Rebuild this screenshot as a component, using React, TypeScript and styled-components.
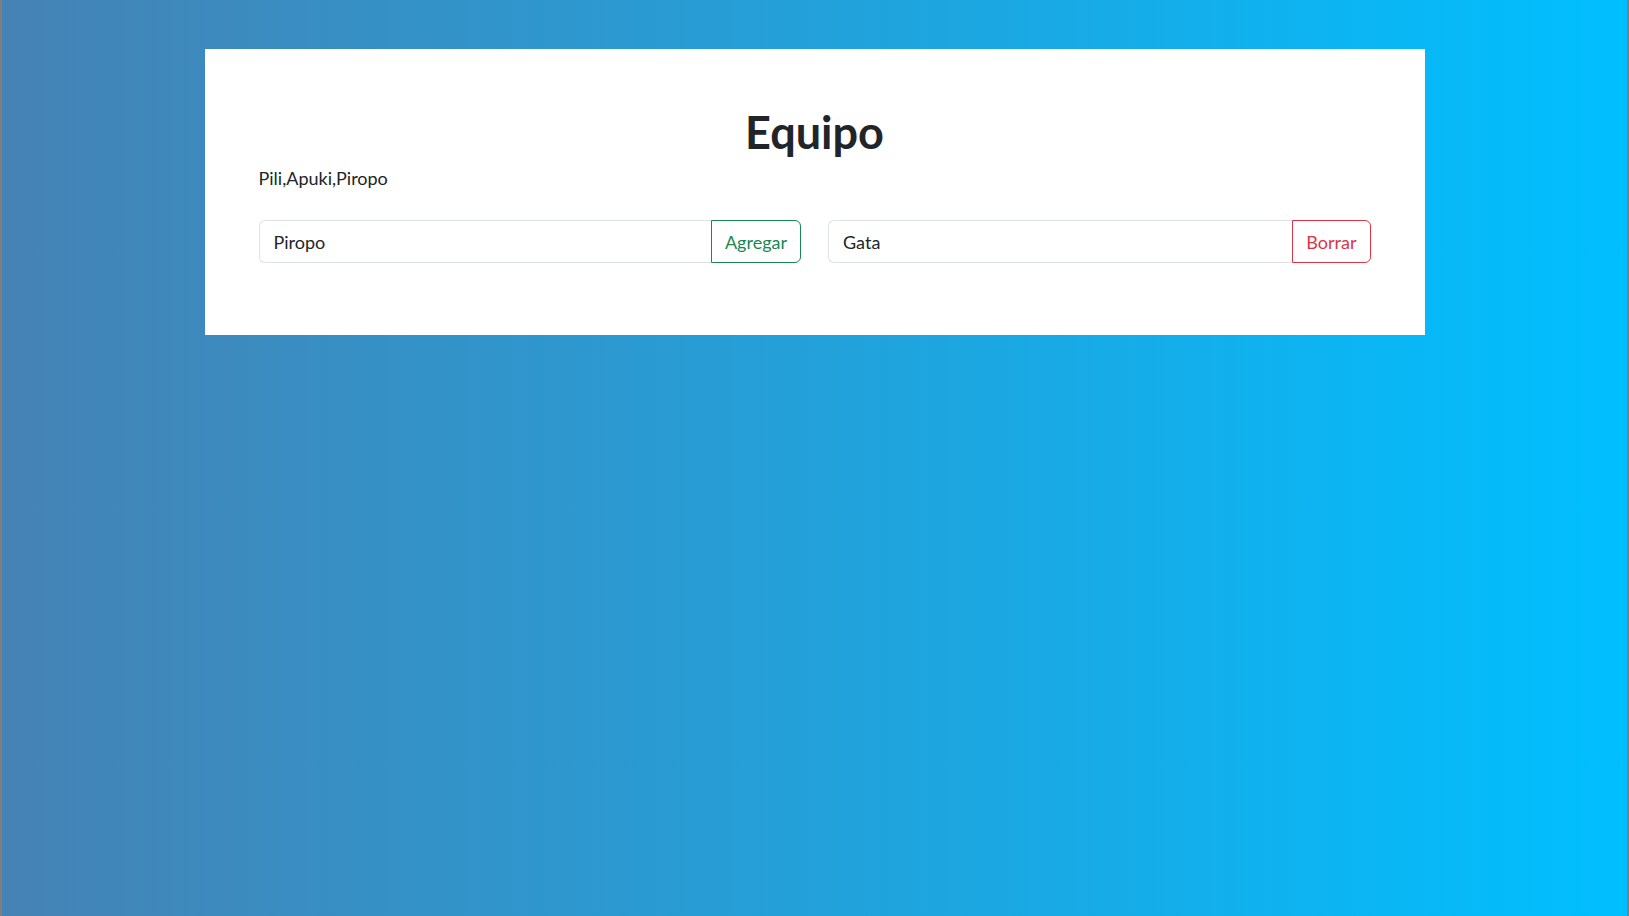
import * as React from 'react';
import styled, { createGlobalStyle } from 'styled-components';

const GlobalStyle = createGlobalStyle`
  html, body {
    margin: 0;
    padding: 0;
  }
  body {
    font-family: 'Lato', 'Noto Sans', sans-serif;
    color: #212529;
  }
  * {
    box-sizing: border-box;
  }
`;

const Page = styled.div`
  min-height: 100vh;
  padding-top: 49px;
  background: linear-gradient(to right, #4682b4, #00bfff);
  border-left: 2px solid #7f7f7f;
  border-right: 2px solid #7f7f7f;
`;

const Card = styled.div`
  width: 1220px;
  margin: 0 auto;
  background: #fff;
  padding: 56px 54px 54px;
`;

const Title = styled.h1`
  margin: 0 0 6px;
  text-align: center;
  font-size: 45px;
  font-weight: 700;
  line-height: 1.2;
`;

const Members = styled.p`
  margin: 1px 0 28px;
  font-size: 18px;
  line-height: 1.5;
`;

const Row = styled.div`
  display: grid;
  grid-template-columns: 1fr 1fr;
  gap: 27px;
  margin-bottom: 18px;
`;

const InputGroup = styled.div`
  display: flex;
  height: 43px;
`;

const Input = styled.input`
  flex: 1;
  min-width: 0;
  height: 100%;
  padding: 0 14px;
  border: 1px solid #dee2e6;
  border-right: none;
  border-radius: 6px 0 0 6px;
  font-family: inherit;
  font-size: 18px;
  color: #212529;
  background: #fff;
  outline: none;
`;

const Button = styled.button<{ tone: string }>`
  height: 100%;
  padding: 0 13px;
  border: 1px solid ${p => p.tone};
  border-radius: 0 6px 6px 0;
  background: #fff;
  color: ${p => p.tone};
  font-family: inherit;
  font-size: 18px;
  cursor: pointer;
  &:hover {
    background: ${p => p.tone};
    color: #fff;
  }
`;

const App: React.FC = () => {
  const [team, setTeam] = React.useState<string[]>(['Pili', 'Apuki', 'Piropo']);
  const [toAdd, setToAdd] = React.useState('Piropo');
  const [toRemove, setToRemove] = React.useState('Gata');

  return (
    <Page>
      <GlobalStyle />
      <Card>
        <Title>Equipo</Title>
        <Members>{team.join(',')}</Members>
        <Row>
          <InputGroup>
            <Input value={toAdd} onChange={e => setToAdd(e.target.value)} />
            <Button tone="#198754" onClick={() => toAdd && setTeam([...team, toAdd])}>
              Agregar
            </Button>
          </InputGroup>
          <InputGroup>
            <Input value={toRemove} onChange={e => setToRemove(e.target.value)} />
            <Button tone="#dc3545" onClick={() => setTeam(team.filter(n => n !== toRemove))}>
              Borrar
            </Button>
          </InputGroup>
        </Row>
      </Card>
    </Page>
  );
};

export default App;
